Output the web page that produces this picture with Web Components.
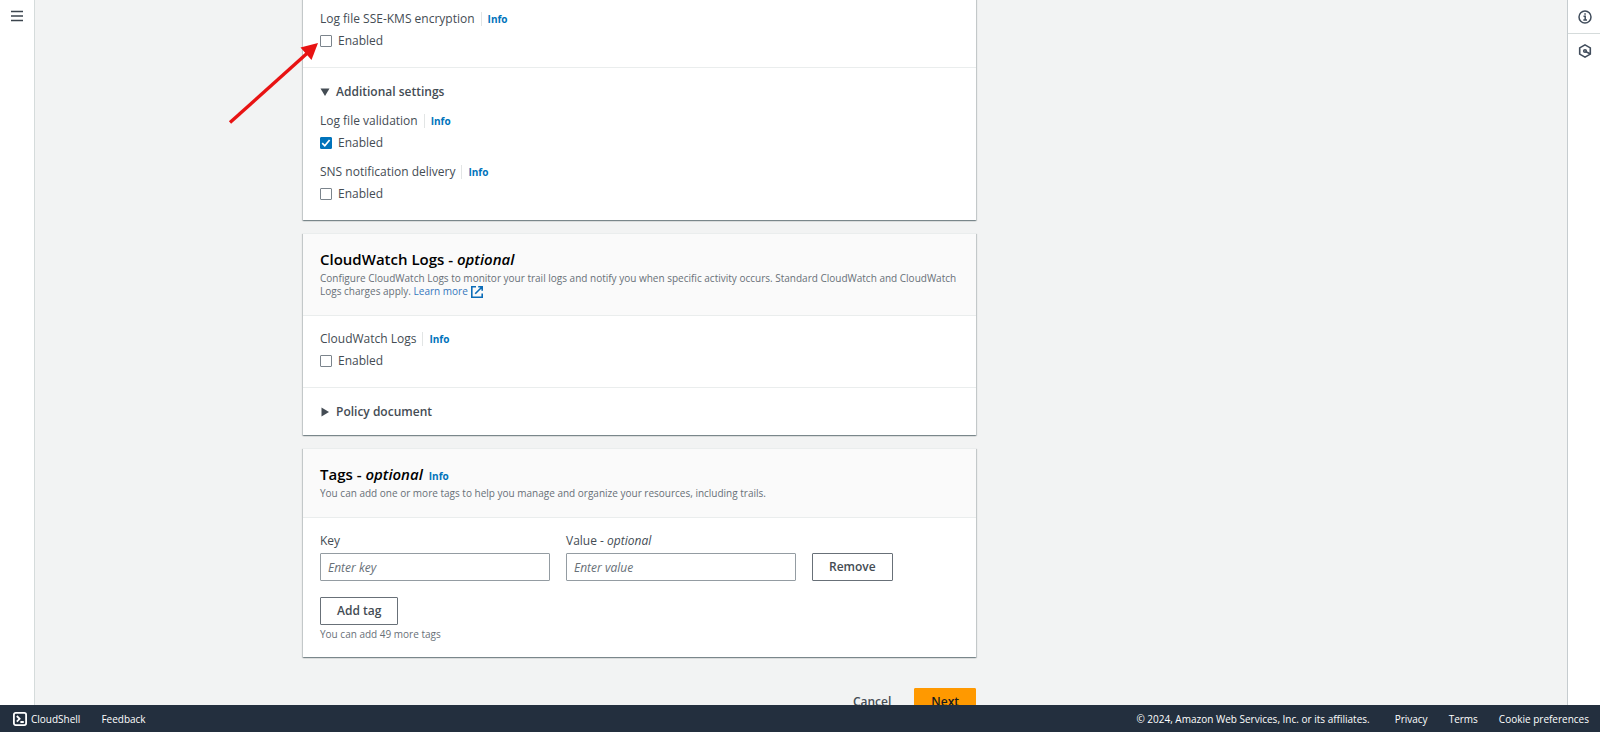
<!DOCTYPE html>
<html lang="en">
<head>
<meta charset="utf-8">
<title>Create trail</title>
<style>
body {
    margin: 0;
    font: 12px/20px "Open Sans", "Noto Sans", sans-serif;
    color: #444c54;
    background: #f2f3f3;
}
</style>
</head>
<body>
<console-shell>
    <trail-card>
        <card-section class="first">
            <check-field label="Log file SSE-KMS encryption"></check-field>
        </card-section>
        <card-section>
            <section-toggle open>Additional settings</section-toggle>
            <check-field label="Log file validation" checked></check-field>
            <check-field label="SNS notification delivery"></check-field>
        </card-section>
    </trail-card>

    <trail-card>
        <card-header slot="header">
            CloudWatch Logs - <i>optional</i>
            <span slot="description">Configure CloudWatch Logs to monitor your trail logs and notify you when specific activity occurs. Standard CloudWatch and CloudWatch Logs charges apply.</span>
            <external-link slot="link">Learn more</external-link>
        </card-header>
        <card-section class="first">
            <check-field label="CloudWatch Logs"></check-field>
        </card-section>
        <card-section class="closed">
            <section-toggle>Policy document</section-toggle>
        </card-section>
    </trail-card>

    <trail-card>
        <card-header slot="header">
            Tags - <i>optional</i>
            <info-link slot="info"></info-link>
            <span slot="description">You can add one or more tags to help you manage and organize your resources, including trails.</span>
        </card-header>
        <card-section class="first">
            <tag-editor></tag-editor>
        </card-section>
    </trail-card>

    <form-actions></form-actions>
</console-shell>

<script>
function define(name, html, setup) {
    const template = document.createElement("template");
    template.innerHTML = html;

    customElements.define(name, class extends HTMLElement {
        constructor() {
            super();
            this.attachShadow({ mode: "open" });
            this.shadowRoot.appendChild(template.content.cloneNode(true));
        }

        connectedCallback() {
            if (setup) {
                setup(this, this.shadowRoot);
            }
        }
    });
}

define("info-link", `<style>
:host { display: inline-block; line-height: 13px; }
a { color: #0073bb; font-size: 10px; font-weight: 700; font-style: normal; text-decoration: none; }
</style>
<a href="#info">Info</a>`);

define("external-link", `<style>
:host { display: inline-block; }
a { display: flex; align-items: center; gap: 3px; height: 13px; color: #3477bd; text-decoration: none; }
svg { width: 12px; height: 12px; }
</style>
<a href="#learn"><slot></slot><svg viewBox="0 0 12 12" fill="none" stroke="#0b6cb8" stroke-width="1.6"><path d="M5 .8H.8v10.4h10.4V7.5M7.2.8h4v4M11 1 4.2 7.8"/></svg></a>`);

define("trail-card", `<style>
:host {
    display: block;
    background: #fff;
    box-shadow: 0 1px 1px 0 rgba(0, 28, 36, .3), 1px 1px 1px 0 rgba(0, 28, 36, .15), -1px 1px 1px 0 rgba(0, 28, 36, .15);
}
</style>
<slot name="header"></slot>
<slot></slot>`);

define("card-header", `<style>
:host {
    display: block;
    padding: 14px 8px 17px 17px;
    background: #fafafa;
    border-top: 1px solid #eaeded;
    border-bottom: 1px solid #eaeded;
}
.title { display: flex; align-items: baseline; gap: 6px; }
h2 { margin: 0; font-size: 15px; line-height: 22px; font-weight: 600; color: #000; }
p { margin: 2px 0 0; font-size: 10px; line-height: 13px; color: #687078; }
::slotted(external-link) { vertical-align: bottom; }
</style>
<div class="title"><h2><slot></slot></h2><slot name="info"></slot></div>
<p><slot name="description"></slot> <slot name="link"></slot></p>`);

define("card-section", `<style>
:host { display: flex; flex-direction: column; gap: 9px; padding: 14px 17px 16px; border-top: 1px solid #eaeded; }
:host(.first) { padding-top: 13px; border-top: 0; }
:host(.closed) { padding-bottom: 13px; }
</style>
<slot></slot>`);

define("check-field", `<style>
:host { display: block; }
fieldset { display: flex; flex-direction: column; gap: 2px; margin: 0; padding: 0; border: 0; }
.name { display: flex; align-items: center; gap: 6px; }
info-link { padding-left: 6px; border-left: 1px solid #e2e5e5; }
label { display: flex; align-items: center; gap: 6px; }
input {
    appearance: none;
    box-sizing: border-box;
    width: 12px;
    height: 12px;
    margin: 0;
    border: 1px solid #7b848c;
    border-radius: 1px;
    background: #fff;
}
input:checked {
    border-color: #0073bb;
    background: #0073bb url("data:image/svg+xml,%3Csvg xmlns='http://www.w3.org/2000/svg' viewBox='0 0 10 10' fill='none' stroke='white' stroke-width='1.7'%3E%3Cpath d='M1.2 5.2 3.8 7.8 8.6 2'/%3E%3C/svg%3E") center / 10px no-repeat;
}
</style>
<fieldset aria-labelledby="name">
    <div class="name"><span id="name"></span><info-link></info-link></div>
    <label><input type="checkbox">Enabled</label>
</fieldset>`, (host, root) => {
    root.querySelector("#name").textContent = host.getAttribute("label");
    root.querySelector("input").checked = host.hasAttribute("checked");
});

define("section-toggle", `<style>
:host { display: block; }
button {
    display: flex;
    align-items: center;
    gap: 6px;
    padding: 0;
    border: 0;
    background: none;
    font: inherit;
    font-weight: 600;
    color: #444c54;
}
svg { width: 10px; height: 10px; fill: #444c54; }
:host([open]) svg { transform: rotate(90deg); }
</style>
<button type="button"><svg viewBox="0 0 10 10"><path d="M1.5.5 9 5 1.5 9.5z"/></svg><slot></slot></button>`, (host, root) => {
    root.querySelector("button").setAttribute("aria-expanded", host.hasAttribute("open"));
});

const buttonStyle = `
button {
    box-sizing: border-box;
    height: 28px;
    padding: 0 16px;
    border: 1px solid #687078;
    border-radius: 1px;
    background: #fff;
    font: inherit;
    font-weight: 600;
    color: #444c54;
}`;

define("tag-editor", `<style>
:host { display: block; }
${buttonStyle}
.row {
    display: grid;
    grid-template-columns: minmax(0, 230px) minmax(0, 230px) auto;
    justify-content: start;
    align-items: end;
    gap: 16px;
    margin-bottom: 16px;
}
.field { display: flex; flex-direction: column; gap: 2px; }
input {
    box-sizing: border-box;
    width: 100%;
    height: 28px;
    padding: 0 7px;
    border: 1px solid #949ca2;
    border-radius: 1px;
    font: inherit;
    color: #16191f;
}
input::placeholder { color: #687078; font-style: italic; opacity: 1; }
p { margin: 3px 0 0; font-size: 10px; line-height: 13px; color: #687078; }
</style>
<div class="row">
    <div class="field"><label for="key">Key</label><input id="key" placeholder="Enter key"></div>
    <div class="field"><label for="value">Value - <i>optional</i></label><input id="value" placeholder="Enter value"></div>
    <button type="button">Remove</button>
</div>
<button type="button">Add tag</button>
<p>You can add 49 more tags</p>`);

define("form-actions", `<style>
:host { display: flex; justify-content: flex-end; gap: 6px; padding-top: 18px; }
${buttonStyle}
.cancel { border-color: transparent; background: none; }
.next { border-color: #f90; background: #f90; color: #16191f; }
</style>
<button type="button" class="cancel">Cancel</button>
<button type="submit" class="next">Next</button>`);

define("console-footer", `<style>
:host {
    display: flex;
    align-items: center;
    gap: 21px;
    height: 27px;
    padding: 0 11px 0 13px;
    background: #232f3e;
    color: #fff;
    font-size: 10px;
    font-weight: 500;
}
a, button { display: flex; align-items: center; gap: 4px; padding: 0; border: 0; background: none; color: inherit; font: inherit; text-decoration: none; }
svg { width: 14px; height: 14px; }
.legal { margin-left: auto; margin-right: 4px; }
</style>
<button type="button"><svg viewBox="0 0 14 14" fill="none" stroke="#fff" stroke-width="1.8"><rect x=".9" y=".9" width="12.2" height="12.2" rx="1.8"/><path d="M3.8 4 6.6 6.8 3.8 9.6M7.4 10h3.4"/></svg>CloudShell</button>
<a href="#feedback">Feedback</a>
<span class="legal">© 2024, Amazon Web Services, Inc. or its affiliates.</span>
<a href="#privacy">Privacy</a>
<a href="#terms">Terms</a>
<button type="button">Cookie preferences</button>`);

define("console-shell", `<style>
:host { display: flex; flex-direction: column; height: 100vh; }
.body { flex: 1; display: flex; min-height: 0; }
nav, aside { box-sizing: border-box; background: #fff; }
nav { width: 35px; padding-top: 10px; border-right: 1px solid #d5dbdb; }
aside { width: 33px; border-left: 1px solid #c6cccf; }
nav button, aside button { display: flex; justify-content: center; width: 100%; padding: 0; border: 0; background: none; }
nav svg { width: 12px; height: 12px; }
aside button { height: 34px; align-items: center; padding-left: 1px; border-bottom: 1px solid #d5dbdb; }
aside button:last-child { border: 0; }
aside svg { width: 14px; height: 14px; }
main {
    flex: 1;
    position: relative;
    overflow: hidden;
    display: grid;
    grid-template-columns: 268px minmax(0, 673px);
    align-content: start;
}
.content { grid-column: 2; display: flex; flex-direction: column; gap: 13px; margin-top: -4px; }
/* The pointer lies over the page and the edge of the first card. */
.pointer { position: absolute; left: 190px; top: 38px; width: 100px; height: 90px; }
</style>
<div class="body">
    <nav><button type="button" aria-label="Open navigation"><svg viewBox="0 0 12 12" stroke="#3b444d" stroke-width="1.6"><path d="M0 1.5h12M0 6h12M0 10.5h12"/></svg></button></nav>
    <main>
        <div class="content"><slot></slot></div>
        <svg class="pointer" viewBox="0 0 100 90"><path d="M5 84.5 83 14.5" stroke="#e81313" stroke-width="3.4"/><path d="M93 5 75.500 9.500 86.500 22z" fill="#e81313"/></svg>
    </main>
    <aside>
        <button type="button" aria-label="Help panel"><svg viewBox="0 0 14 14" fill="none" stroke="#414d5c" stroke-width="1.5"><circle cx="7" cy="7" r="6"/><path d="M5.500 6.300H7.200V10M5.300 10h3.700M6.300 3.900h1.500"/></svg></button>
        <button type="button" aria-label="Tutorials"><svg viewBox="0 0 14 14" fill="none" stroke="#414d5c" stroke-width="1.6"><path d="M7 .9 12.300 3.900V10.100L7 13.100 1.700 10.100V3.900z"/><circle cx="7" cy="7" r="1.300"/><path d="M7.500 7.500 12 9.800"/></svg></button>
    </aside>
</div>
<console-footer></console-footer>`);
</script>
</body>
</html>
